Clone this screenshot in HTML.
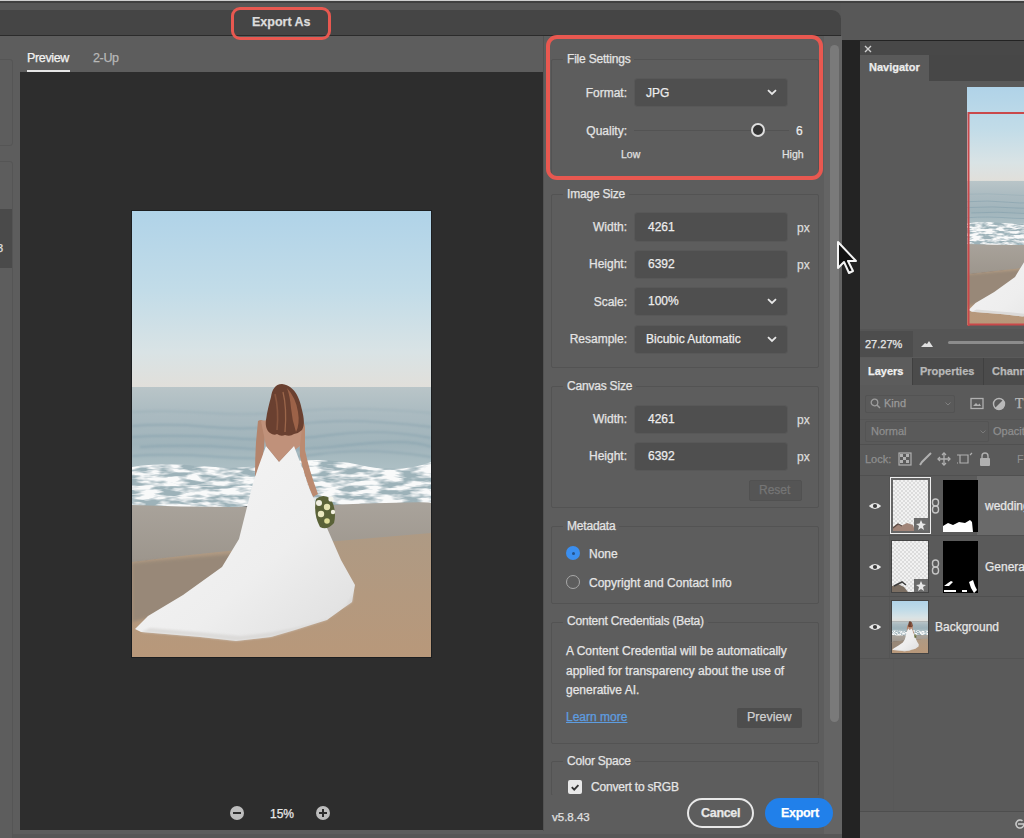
<!DOCTYPE html>
<html><head><meta charset="utf-8">
<style>
*{margin:0;padding:0;box-sizing:border-box}
html,body{width:1024px;height:838px;overflow:hidden;background:#575757;font-family:"Liberation Sans",sans-serif;color:#e0e0e0}
.a{position:absolute}
.t{position:absolute;white-space:nowrap;line-height:1;-webkit-text-stroke:0.25px currentColor}
.fs{border:1px solid #535353;border-radius:2px}
.lg{font-size:12px;color:#e4e4e4;background:#5d5d5d;padding:0 4px;letter-spacing:-0.2px}
.lb{font-size:12px;color:#e4e4e4}
.vl{font-size:12px;color:#ececec}
.px{font-size:12px;color:#dcdcdc}
.sm{font-size:10.5px;color:#e0e0e0}
.tx{font-size:12px;color:#e6e6e6}
.chk{background:repeating-conic-gradient(#dcdcdc 0 25%,#f2f2f2 0 50%) 0 0/4px 4px}
.inp{background:#4f4f4f;border-radius:3px;box-shadow:0 0 0 1px #585858}
</style></head><body>
<!-- top strip -->
<div class="a" style="left:0;top:0;width:1024px;height:1px;background:#cfcfcf"></div>
<div class="a" style="left:0;top:1px;width:1024px;height:2px;background:#404040"></div>
<!-- right area behind -->
<div class="a" style="left:841px;top:3px;width:183px;height:38px;background:#585858"></div>
<div class="a" style="left:842px;top:40px;width:182px;height:798px;background:#232323"></div>

<!-- dialog -->
<div class="a" style="left:-10px;top:10px;width:851px;height:824px;background:#5d5d5d;border-radius:9px;overflow:hidden">
  <div class="a" style="left:0;top:0;width:851px;height:26px;background:#454545;border-bottom:1px solid #2b2b2b"></div>
</div>
<div class="t" style="left:252px;top:16px;font-size:12.5px;font-weight:bold;color:#dcdcdc">Export As</div>
<div class="a" style="left:231px;top:7px;width:100px;height:33px;border:3.5px solid #e85850;border-radius:9px"></div>

<!-- left sidebar cards -->
<div class="a" style="left:-6px;top:59px;width:19px;height:87px;border:1px solid #555;border-radius:3px;background:#5d5d5d"></div>
<div class="a" style="left:-6px;top:161px;width:19px;height:690px;border:1px solid #555;border-radius:3px;background:#5d5d5d"></div>
<div class="a" style="left:0;top:209px;width:12px;height:59px;background:#4a4a4a"></div>
<div class="t" style="left:-3px;top:243px;font-size:11px;color:#e0e0e0">3</div>

<!-- tabs -->
<div class="t" style="left:27px;top:52px;font-size:12.5px;letter-spacing:-0.35px;color:#f2f2f2">Preview</div>
<div class="a" style="left:27px;top:70px;width:43px;height:2px;background:#e6e6e6"></div>
<div class="t" style="left:93px;top:52px;font-size:12.5px;letter-spacing:-0.35px;color:#b8b8b8">2-Up</div>

<!-- preview area -->
<div class="a" style="left:20px;top:72px;width:523px;height:758px;background:#2d2d2d"></div>
<div class="a" style="left:131px;top:210px;width:301px;height:448px;background:#1c1e20"></div>

<!-- photo -->
<svg class="a" style="left:132px;top:211px" width="299" height="446" viewBox="132 211 299 446">
  <defs>
    <linearGradient id="sky" x1="0" y1="0" x2="0" y2="1">
      <stop offset="0" stop-color="#b0d3e8"/>
      <stop offset="0.45" stop-color="#c2dce8"/>
      <stop offset="0.8" stop-color="#d9e3e5"/>
      <stop offset="1" stop-color="#e1dfda"/>
    </linearGradient>
    <linearGradient id="sea" x1="0" y1="0" x2="0" y2="1">
      <stop offset="0" stop-color="#b9c5c8"/>
      <stop offset="0.35" stop-color="#aabac0"/>
      <stop offset="0.7" stop-color="#a0b4bb"/>
      <stop offset="1" stop-color="#adbfc4"/>
    </linearGradient>
    <linearGradient id="sand" x1="0" y1="0" x2="0" y2="1">
      <stop offset="0" stop-color="#ae9a84"/>
      <stop offset="1" stop-color="#b8987a"/>
    </linearGradient>
    <linearGradient id="wet" x1="0" y1="0" x2="0" y2="1">
      <stop offset="0" stop-color="#a9a39b"/>
      <stop offset="1" stop-color="#9c958c"/>
    </linearGradient>
    <linearGradient id="hair" x1="0" y1="0" x2="1" y2="1">
      <stop offset="0" stop-color="#6a3a2c"/>
      <stop offset="0.5" stop-color="#8e5640"/>
      <stop offset="1" stop-color="#74452f"/>
    </linearGradient>
    <linearGradient id="dress" x1="0" y1="0" x2="1" y2="1">
      <stop offset="0" stop-color="#f6f6f6"/>
      <stop offset="0.6" stop-color="#eeeeee"/>
      <stop offset="1" stop-color="#dedede"/>
    </linearGradient>
    <filter id="blur1"><feGaussianBlur stdDeviation="0.8"/></filter>
    <filter id="blur2"><feGaussianBlur stdDeviation="1.5"/></filter>
  <filter id="foamf" x="132" y="460" width="299" height="50" filterUnits="userSpaceOnUse">
      <feTurbulence type="fractalNoise" baseFrequency="0.05 0.22" numOctaves="3" seed="7" result="n"/>
      <feColorMatrix in="n" type="matrix" values="0 0 0 0 0.95  0 0 0 0 0.96  0 0 0 0 0.96  0 0 0 3.5 -1.2"/>
    </filter>
    <clipPath id="foamclip"><path d="M132 467 Q160 462 200 466 T280 463 T360 465 T431 462 L431 504 Q380 508 330 505 T230 508 T132 506 Z"/></clipPath>
  </defs>
  <g id="photo">
  <rect x="132" y="211" width="299" height="177" fill="url(#sky)"/>
  <rect x="132" y="387" width="299" height="82" fill="url(#sea)"/>
  <g stroke="#7494a4" stroke-width="1.4" fill="none" opacity="0.5" filter="url(#blur1)">
    <path d="M132 412 Q170 410 210 413 T300 411 T431 413" opacity="0.5"/>
    <path d="M132 426 Q170 423 210 427 T300 424 T431 427"/>
    <path d="M132 437 Q180 434 230 438 T330 435 T431 438"/>
    <path d="M140 447 Q190 444 240 448 T350 445 T431 447"/>
    <path d="M132 456 Q170 453 220 457 T320 454 T431 457"/>
  </g>
  <!-- foam -->
  <path d="M132 467 Q160 462 200 466 T280 463 T360 465 T431 462 L431 504 Q380 508 330 505 T230 508 T132 506 Z" fill="#9db2b9"/>
  <rect x="132" y="460" width="299" height="50" fill="#ffffff" filter="url(#foamf)" clip-path="url(#foamclip)"/>
  
  <!-- wet sand -->
  <path d="M132 505 Q230 509 330 505 T431 503 L431 540 Q300 545 200 555 T132 565 Z" fill="url(#wet)"/>
  <!-- dry sand -->
  <path d="M132 562 Q200 553 280 546 T431 533 L431 657 L132 657 Z" fill="url(#sand)"/>
  <path d="M132 563 Q200 556 260 552 L250 590 Q200 605 132 622 Z" fill="#948677" opacity="0.85" filter="url(#blur2)"/>
  <!-- bride -->
  <g>
  <!-- arms -->
  <path d="M258 421 Q262 418 266 423 L264 448 Q262 463 260 476 L255 476 Q255 458 256 442 Z" fill="#b4846c"/>
  <path d="M299 420 Q304 419 305 427 L305 450 Q309 470 318 494 L313 497 Q304 476 300 456 Z" fill="#bb8a70"/>
  <!-- back skin -->
  <path d="M261 421 Q280 417 303 420 L300 446 L279 462 L266 446 Z" fill="#c0917a"/>
  <path d="M266 446 L279 462 L294 446" stroke="#a87a64" stroke-width="0.8" fill="none"/>
  <!-- dress -->
  <path d="M266 446 L279 462 L294 446 L303 470 L308 486 L327 528 L341 560 L355 585 L352 602 L327 620 L295 630 L271 637 L236 641 L200 637 L165 634 L141 632 L135 629 L148 616 L183 595 L222 567 L239 539 L246 511 L253 483 L258 468 Z" fill="url(#dress)"/>
  <path d="M150 628 Q200 632 240 636 Q290 632 330 618 Q350 606 354 590 L352 602 L327 620 L295 630 L271 637 L236 641 L200 637 L165 634 L141 632 Z" fill="#d6d4d2" opacity="0.7" filter="url(#blur1)"/>
  <!-- hair -->
  <path d="M282 384 C275 384 272 390 271 397 C269 404 267 412 266 420 C265 426 267 431 270 433 Q274 436 277 434 Q281 437 285 435 Q290 437 294 434 Q299 433 302 430 C305 425 304 418 302 410 C300 400 296 386 282 384 Z" fill="#6a4030"/>
  <path d="M287 388 Q296 398 298 412 Q300 424 296 432 Q292 420 291 408 Q290 396 287 388 Z" fill="#a4694c" opacity="0.85"/>
  <path d="M275 394 Q279 410 277 430" stroke="#8e5a42" stroke-width="1.6" fill="none" opacity="0.8"/>
  <path d="M283 392 Q287 408 285 432" stroke="#b07656" stroke-width="1.3" fill="none" opacity="0.7"/>
  <!-- bouquet -->
  <path d="M316 499 Q323 493 331 499 Q337 511 334 523 Q327 531 320 527 Q313 514 316 499 Z" fill="#5a6238"/>
  <circle cx="319" cy="503" r="3" fill="#f0eee0"/><circle cx="327" cy="507" r="3.2" fill="#e4e2b0"/><circle cx="321" cy="514" r="3.2" fill="#eae8c0"/><circle cx="331" cy="499" r="2.6" fill="#f4f4ec"/><circle cx="327" cy="521" r="2.8" fill="#dedc98"/><circle cx="333" cy="512" r="2.2" fill="#f2f0e0"/>
  </g>
  </g>
</svg>


<!-- zoom controls -->
<div class="a" style="left:230px;top:806px;width:14px;height:14px;border-radius:50%;background:#bdbdbd"></div>
<div class="a" style="left:233px;top:812px;width:8px;height:2px;background:#2d2d2d"></div>
<div class="t" style="left:270px;top:808px;font-size:12px;color:#e8e8e8">15%</div>
<div class="a" style="left:316px;top:806px;width:14px;height:14px;border-radius:50%;background:#bdbdbd"></div>
<div class="a" style="left:319px;top:812px;width:8px;height:2px;background:#2d2d2d"></div>
<div class="a" style="left:322px;top:809px;width:2px;height:8px;background:#2d2d2d"></div>

<!-- scrollbar -->
<div class="a" style="left:824px;top:36px;width:18px;height:798px;background:#646464"></div>
<div class="a" style="left:830px;top:45px;width:9px;height:677px;background:#7a7a7a;border-radius:5px"></div>


<!-- settings panel -->
<div class="a" style="left:543px;top:36px;width:1px;height:795px;background:#525252"></div>
<!-- fieldsets -->
<div class="a fs" style="left:551px;top:59px;width:268px;height:119px"></div>
<div class="a fs" style="left:551px;top:194px;width:268px;height:174px"></div>
<div class="a fs" style="left:551px;top:386px;width:268px;height:122px"></div>
<div class="a fs" style="left:551px;top:526px;width:268px;height:78px"></div>
<div class="a fs" style="left:551px;top:622px;width:268px;height:122px"></div>
<div class="a fs" style="left:551px;top:761px;width:268px;height:35px"></div>
<!-- legends -->
<div class="t lg" style="left:563px;top:53px">File Settings</div>
<div class="t lg" style="left:563px;top:188px">Image Size</div>
<div class="t lg" style="left:563px;top:380px">Canvas Size</div>
<div class="t lg" style="left:563px;top:520px">Metadata</div>
<div class="t lg" style="left:563px;top:615px">Content Credentials (Beta)</div>
<div class="t lg" style="left:563px;top:755px">Color Space</div>

<!-- file settings -->
<div class="t lb" style="right:397px;top:87px">Format:</div>
<div class="a inp" style="left:635px;top:79px;width:152px;height:27px"></div>
<div class="t vl" style="left:646px;top:87px">JPG</div>
<svg class="a chev" style="left:767px;top:89px" width="10" height="7" viewBox="0 0 10 7"><path d="M1 1.2 L5 5 L9 1.2" fill="none" stroke="#e8e8e8" stroke-width="1.8"/></svg>
<div class="t lb" style="right:397px;top:125px">Quality:</div>
<div class="a" style="left:634px;top:130px;width:155px;height:1px;background:#535353"></div>
<div class="a" style="left:751px;top:123px;width:14px;height:14px;border-radius:50%;border:2px solid #dedede;background:#333"></div>
<div class="t vl" style="left:796px;top:125px">6</div>
<div class="t sm" style="left:621px;top:149px">Low</div>
<div class="t sm" style="left:782px;top:149px">High</div>

<!-- image size -->
<div class="t lb" style="right:397px;top:221px">Width:</div>
<div class="a inp" style="left:635px;top:213px;width:152px;height:28px"></div>
<div class="t vl" style="left:648px;top:221px">4261</div>
<div class="t px" style="left:797px;top:222px">px</div>
<div class="t lb" style="right:397px;top:258px">Height:</div>
<div class="a inp" style="left:635px;top:251px;width:152px;height:27px"></div>
<div class="t vl" style="left:648px;top:258px">6392</div>
<div class="t px" style="left:797px;top:259px">px</div>
<div class="t lb" style="right:397px;top:296px">Scale:</div>
<div class="a inp" style="left:635px;top:288px;width:152px;height:27px"></div>
<div class="t vl" style="left:648px;top:295px">100%</div>
<svg class="a chev" style="left:767px;top:298px" width="10" height="7" viewBox="0 0 10 7"><path d="M1 1.2 L5 5 L9 1.2" fill="none" stroke="#e8e8e8" stroke-width="1.8"/></svg>
<div class="t lb" style="right:397px;top:333px">Resample:</div>
<div class="a inp" style="left:635px;top:326px;width:152px;height:27px"></div>
<div class="t vl" style="left:646px;top:333px">Bicubic Automatic</div>
<svg class="a chev" style="left:767px;top:336px" width="10" height="7" viewBox="0 0 10 7"><path d="M1 1.2 L5 5 L9 1.2" fill="none" stroke="#e8e8e8" stroke-width="1.8"/></svg>

<!-- canvas size -->
<div class="t lb" style="right:397px;top:413px">Width:</div>
<div class="a inp" style="left:635px;top:406px;width:152px;height:27px"></div>
<div class="t vl" style="left:648px;top:413px">4261</div>
<div class="t px" style="left:797px;top:414px">px</div>
<div class="t lb" style="right:397px;top:450px">Height:</div>
<div class="a inp" style="left:635px;top:443px;width:152px;height:27px"></div>
<div class="t vl" style="left:648px;top:450px">6392</div>
<div class="t px" style="left:797px;top:451px">px</div>
<div class="a" style="left:749px;top:480px;width:53px;height:21px;background:#555;border:1px solid #515151;border-radius:2px"></div>
<div class="t" style="left:759px;top:484px;font-size:12px;color:#757575">Reset</div>

<!-- metadata -->
<div class="a" style="left:566px;top:546px;width:14px;height:14px;border-radius:50%;background:#3b8ff0"></div>
<div class="a" style="left:571.5px;top:551.5px;width:3px;height:3px;border-radius:50%;background:#24528a"></div>
<div class="t tx" style="left:589px;top:548px">None</div>
<div class="a" style="left:566px;top:575px;width:14px;height:14px;border-radius:50%;border:1.5px solid #a8a8a8"></div>
<div class="t tx" style="left:589px;top:577px">Copyright and Contact Info</div>

<!-- content credentials -->
<div class="t tx" style="left:566px;top:645px">A Content Credential will be automatically</div>
<div class="t tx" style="left:566px;top:665px">applied for transparency about the use of</div>
<div class="t tx" style="left:566px;top:684px">generative AI.</div>
<div class="t" style="left:566px;top:711px;font-size:12px;color:#5d9de0;text-decoration:underline">Learn more</div>
<div class="a" style="left:737px;top:708px;width:65px;height:20px;background:#4d4d4d;border-radius:2px"></div>
<div class="t" style="left:747px;top:711px;font-size:12.5px;color:#d0d0d0">Preview</div>

<!-- color space -->
<div class="a" style="left:568px;top:780px;width:14px;height:14px;border-radius:2px;background:#e8e8e8"></div>
<svg class="a" style="left:568px;top:780px" width="14" height="14" viewBox="0 0 14 14"><path d="M3.8 7.2 L6.2 9.6 L10.4 5.2" fill="none" stroke="#333" stroke-width="1.9"/></svg>
<div class="t tx" style="left:591px;top:781px;letter-spacing:-0.2px">Convert to sRGB</div>

<!-- footer -->
<div class="a" style="left:544px;top:795px;width:280px;height:39px;background:#5d5d5d"></div>
<div class="t" style="left:552px;top:812px;font-size:11.5px;color:#e0e0e0">v5.8.43</div>
<div class="a" style="left:687px;top:798px;width:67px;height:30px;border-radius:15px;border:2px solid #e8e8e8"></div>
<div class="t" style="left:701px;top:807px;font-size:12.5px;font-weight:bold;letter-spacing:-0.3px;color:#e8e8e8">Cancel</div>
<div class="a" style="left:765px;top:798px;width:68px;height:30px;border-radius:15px;background:#2180ea"></div>
<div class="t" style="left:781px;top:807px;font-size:12.5px;font-weight:bold;letter-spacing:-0.3px;color:#fff">Export</div>

<!-- red highlight -->
<div class="a" style="left:546px;top:35px;width:277px;height:145px;border:4.5px solid #e85850;border-radius:11px"></div>


<!-- right PS panels -->

<!-- PS right panels -->
<div class="a" style="left:860px;top:41px;width:164px;height:797px;background:#5a5a5a"></div>
<div class="a" style="left:860px;top:41px;width:164px;height:14px;background:#484848"></div>
<svg class="a" style="left:864px;top:45px" width="8" height="8" viewBox="0 0 8 8"><path d="M1 1L7 7M7 1L1 7" stroke="#cfcfcf" stroke-width="1.4"/></svg>
<div class="a" style="left:929px;top:55px;width:95px;height:26px;background:#474747"></div>
<div class="t" style="left:869px;top:62px;font-size:11px;font-weight:bold;color:#ececec">Navigator</div>
<!-- navigator thumb -->
<svg class="a" style="left:967px;top:87px" width="57" height="239" viewBox="0 0 57 239">
 <g transform="scale(0.5336) translate(-132 -211)"><use href="#photo"/></g>
 <path d="M1.5 239 L1.5 26 L57 26" fill="none" stroke="#c9484a" stroke-width="2"/>
 <path d="M1 237.5 L57 237.5" stroke="#c9484a" stroke-width="2"/>
</svg>

<!-- zoom bar -->
<div class="a" style="left:860px;top:329px;width:164px;height:28px;background:#555"></div>
<div class="a" style="left:860px;top:331px;width:53px;height:26px;background:#4d4d4d"></div>
<div class="t" style="left:865px;top:339px;font-size:11px;color:#e8e8e8">27.27%</div>
<svg class="a" style="left:921px;top:340px" width="12" height="8" viewBox="0 0 12 8"><path d="M0 7 L4 3 L6 4 L8 1 L12 7 Z" fill="#e0e0e0"/></svg>
<div class="a" style="left:948px;top:341px;width:76px;height:3px;background:#8c8c8c;border-radius:2px"></div>
<!-- tabs -->
<div class="a" style="left:860px;top:358px;width:164px;height:27px;background:#4b4b4b"></div>
<div class="a" style="left:860px;top:358px;width:52px;height:27px;background:#5c5c5c"></div>
<div class="t" style="left:868px;top:366px;font-size:11px;font-weight:bold;color:#f0f0f0">Layers</div>
<div class="a" style="left:912px;top:358px;width:1px;height:27px;background:#404040"></div>
<div class="t" style="left:920px;top:366px;font-size:11px;font-weight:bold;color:#b8b8b8">Properties</div>
<div class="a" style="left:983px;top:358px;width:1px;height:27px;background:#404040"></div>
<div class="t" style="left:992px;top:366px;font-size:11px;font-weight:bold;color:#b8b8b8">Channels</div>
<!-- kind row -->
<div class="a" style="left:865px;top:395px;width:90px;height:18px;background:#5a5a5a;border:1px solid #535353;border-radius:2px"></div>
<svg class="a" style="left:870px;top:398px" width="11" height="11" viewBox="0 0 11 11"><circle cx="4.5" cy="4.5" r="3.3" fill="none" stroke="#9c9c9c" stroke-width="1.3"/><path d="M7 7L10 10" stroke="#9c9c9c" stroke-width="1.5"/></svg>
<div class="t" style="left:884px;top:398px;font-size:11px;color:#9a9a9a">Kind</div>
<svg class="a" style="left:945px;top:402px" width="6" height="4" viewBox="0 0 6 4"><path d="M0.5 0.5L3 3L5.5 0.5" fill="none" stroke="#808080" stroke-width="1"/></svg>
<svg class="a" style="left:970px;top:397px" width="14" height="13" viewBox="0 0 14 13"><rect x="1" y="1.5" width="12" height="10" fill="none" stroke="#b0b0b0" stroke-width="1.3"/><path d="M3 9 L6 6 L8 8 L9.5 6.5 L11 9 Z" fill="#b0b0b0"/></svg>
<svg class="a" style="left:992px;top:397px" width="14" height="14" viewBox="0 0 14 14"><circle cx="7" cy="7" r="5.5" fill="none" stroke="#b8b8b8" stroke-width="1.4"/><path d="M11 3 A5.5 5.5 0 0 1 3 11 Z" fill="#b8b8b8"/></svg>
<div class="t" style="left:1015px;top:397px;font-size:14px;font-family:'Liberation Serif',serif;color:#b8b8b8">T</div>
<!-- normal row -->
<div class="a" style="left:860px;top:419px;width:164px;height:1px;background:#555"></div>
<div class="a" style="left:865px;top:421px;width:124px;height:21px;background:#5a5a5a;border:1px solid #545454;border-radius:2px"></div>
<div class="t" style="left:871px;top:426px;font-size:11px;color:#8e8e8e">Normal</div>
<svg class="a" style="left:980px;top:430px" width="6" height="4" viewBox="0 0 6 4"><path d="M0.5 0.5L3 3L5.5 0.5" fill="none" stroke="#7a7a7a" stroke-width="1"/></svg>
<div class="t" style="left:993px;top:426px;font-size:11px;color:#8e8e8e">Opacity</div>
<div class="a" style="left:860px;top:444px;width:164px;height:1px;background:#505050"></div>
<!-- lock row -->
<div class="t" style="left:865px;top:454px;font-size:11px;color:#8f8f8f">Lock:</div>
<svg class="a" style="left:898px;top:452px" width="126" height="15" viewBox="0 0 126 15">
 <g fill="#b0b0b0">
  <rect x="1" y="1" width="12" height="12" fill="none" stroke="#b0b0b0" stroke-width="1.2"/>
  <rect x="2" y="2" width="3" height="3"/><rect x="8" y="2" width="3" height="3"/><rect x="5" y="5" width="3" height="3"/><rect x="2" y="8" width="3" height="3"/><rect x="8" y="8" width="3" height="3"/>
 </g>
 <path d="M22 13 L24 10 L33 1" stroke="#b0b0b0" stroke-width="2" fill="none"/>
 <g stroke="#b0b0b0" stroke-width="1.3" fill="none"><path d="M46 1 V13 M40 7 H52"/><path d="M44 3 L46 1 L48 3 M44 11 L46 13 L48 11 M42 5 L40 7 L42 9 M50 5 L52 7 L50 9"/></g>
 <g stroke="#b0b0b0" stroke-width="1.2" fill="none"><path d="M59 3 H70 V11 H62 V3 M59 11 H60 M72 3 L74 1"/></g>
 <g fill="#b0b0b0"><rect x="82" y="6" width="10" height="8" rx="1"/></g>
 <path d="M84 6 V4 A3 3 0 0 1 90 4 V6" fill="none" stroke="#b0b0b0" stroke-width="1.4"/>
 <text x="119" y="11" font-size="11" fill="#8f8f8f" font-family="Liberation Sans">F</text>
</svg>
<div class="a" style="left:860px;top:475px;width:164px;height:1px;background:#505050"></div>
<!-- layers -->
<div class="a" style="left:889px;top:476px;width:1px;height:182px;background:#555"></div>
<div class="a" style="left:977px;top:476px;width:47px;height:59px;background:#6a6a6a"></div>
<div class="a" style="left:860px;top:535px;width:164px;height:1px;background:#505050"></div>
<div class="a" style="left:860px;top:596px;width:164px;height:1px;background:#505050"></div>
<div class="a" style="left:860px;top:658px;width:164px;height:1px;background:#535353"></div>
<!-- eyes -->
<svg class="a" style="left:868px;top:501px" width="14" height="10" viewBox="0 0 14 10"><path d="M0.8 5 Q7 -1.2 13.2 5 Q7 11.2 0.8 5 Z" fill="#e8e8e8"/><circle cx="7" cy="5" r="2.1" fill="#3c3c3c"/></svg>
<svg class="a" style="left:868px;top:562px" width="14" height="10" viewBox="0 0 14 10"><path d="M0.8 5 Q7 -1.2 13.2 5 Q7 11.2 0.8 5 Z" fill="#e8e8e8"/><circle cx="7" cy="5" r="2.1" fill="#3c3c3c"/></svg>
<svg class="a" style="left:868px;top:622px" width="14" height="10" viewBox="0 0 14 10"><path d="M0.8 5 Q7 -1.2 13.2 5 Q7 11.2 0.8 5 Z" fill="#e8e8e8"/><circle cx="7" cy="5" r="2.1" fill="#3c3c3c"/></svg>
<!-- row1 thumbs -->
<div class="a" style="left:890px;top:477px;width:41px;height:57px;border:1.5px solid #eeeeee;background:#666"></div>
<div class="a chk" style="left:893px;top:480px;width:35px;height:51px"></div>
<svg class="a" style="left:893px;top:518px" width="35" height="13" viewBox="0 0 35 13"><path d="M0 13 V9 L4 6 L8 8 L14 5 L20 7 L22 13 Z" fill="#a08478"/><path d="M0 10 L5 6 L9 8" stroke="#5a4a44" stroke-width="1.2" fill="none"/><rect x="21" y="0" width="14" height="13" fill="#6b6b6b"/><path d="M28 2 L29.5 5.5 L33 6 L30 8 L31 12 L28 10 L25 12 L26 8 L23 6 L26.5 5.5 Z" fill="#e8e8e8" transform="translate(0 0)"/></svg>
<svg class="a" style="left:931px;top:498px" width="9" height="16" viewBox="0 0 9 16"><rect x="1.5" y="1" width="6" height="7" rx="3" fill="none" stroke="#c4c4c4" stroke-width="1.4"/><rect x="1.5" y="8" width="6" height="7" rx="3" fill="none" stroke="#c4c4c4" stroke-width="1.4"/></svg>
<div class="a" style="left:943px;top:480px;width:35px;height:52px;background:#000"></div>
<svg class="a" style="left:943px;top:480px" width="35" height="52" viewBox="0 0 35 52"><path d="M0 52 V46 L5 43 L10 45 L16 42 L22 43 L27 40 L29 42 L30 52 Z" fill="#fff"/></svg>
<div class="t" style="left:985px;top:500px;font-size:12px;color:#e6e6e6">wedding</div>
<!-- row2 -->
<div class="a" style="left:891px;top:540px;width:38px;height:53px;background:#444"></div>
<div class="a chk" style="left:892px;top:541px;width:36px;height:51px"></div>
<svg class="a" style="left:892px;top:578px" width="36" height="14" viewBox="0 0 36 14"><path d="M0 14 V8 L6 6 L12 9 L16 14 Z" fill="#7b6e62"/><path d="M2 8 L10 4 L14 7" stroke="#3e3e3e" stroke-width="1.5" fill="none"/><rect x="22" y="1" width="14" height="13" fill="#6b6b6b"/><path d="M29 3 L30.5 6.5 L34 7 L31 9 L32 13 L29 11 L26 13 L27 9 L24 7 L27.5 6.5 Z" fill="#e8e8e8"/></svg>
<svg class="a" style="left:931px;top:559px" width="9" height="16" viewBox="0 0 9 16"><rect x="1.5" y="1" width="6" height="7" rx="3" fill="none" stroke="#c4c4c4" stroke-width="1.4"/><rect x="1.5" y="8" width="6" height="7" rx="3" fill="none" stroke="#c4c4c4" stroke-width="1.4"/></svg>
<div class="a" style="left:943px;top:541px;width:35px;height:52px;background:#000"></div>
<svg class="a" style="left:943px;top:541px" width="35" height="52" viewBox="0 0 35 52"><path d="M1 45 L5 42 L8 40 L10 41 L6 45 Z M1 49 H13 V51 H1 Z M26 41 L30 39 L32 45 L34 49 L31 52 L28 47 Z M19 49 H24 V51 H19Z" fill="#fff"/></svg>
<div class="t" style="left:985px;top:561px;font-size:12px;color:#e6e6e6">Generative</div>
<!-- row3 -->
<svg class="a" style="left:891px;top:600px" width="38" height="54" viewBox="0 0 38 54">
 <rect width="38" height="54" fill="#444"/>
 <g transform="translate(1 1) scale(0.1204 0.1166) translate(-132 -211)"><use href="#photo"/></g>
</svg>
<div class="t" style="left:935px;top:621px;font-size:12px;color:#e6e6e6">Background</div>
<!-- bottom bar -->
<div class="a" style="left:893px;top:659px;width:1px;height:152px;background:#585858"></div>
<div class="a" style="left:860px;top:811px;width:164px;height:1px;background:#4e4e4e"></div>
<div class="a" style="left:860px;top:812px;width:164px;height:26px;background:#5e5e5e"></div>
<svg class="a" style="left:1014px;top:818px" width="12" height="12" viewBox="0 0 12 12"><path d="M10 6 A4 4 0 1 1 8.5 2.9" fill="none" stroke="#c8c8c8" stroke-width="1.6"/><path d="M4 6 H11" stroke="#c8c8c8" stroke-width="1.6"/></svg>
<!-- cursor -->
<svg class="a" style="left:836px;top:240px" width="24" height="36" viewBox="0 0 24 36"><path d="M2 2 L2 28 L8 22 L13 33 L17 31 L12 21 L20 21 Z" fill="#111" stroke="#f4f4f4" stroke-width="2" stroke-linejoin="round"/></svg>

</body></html>
